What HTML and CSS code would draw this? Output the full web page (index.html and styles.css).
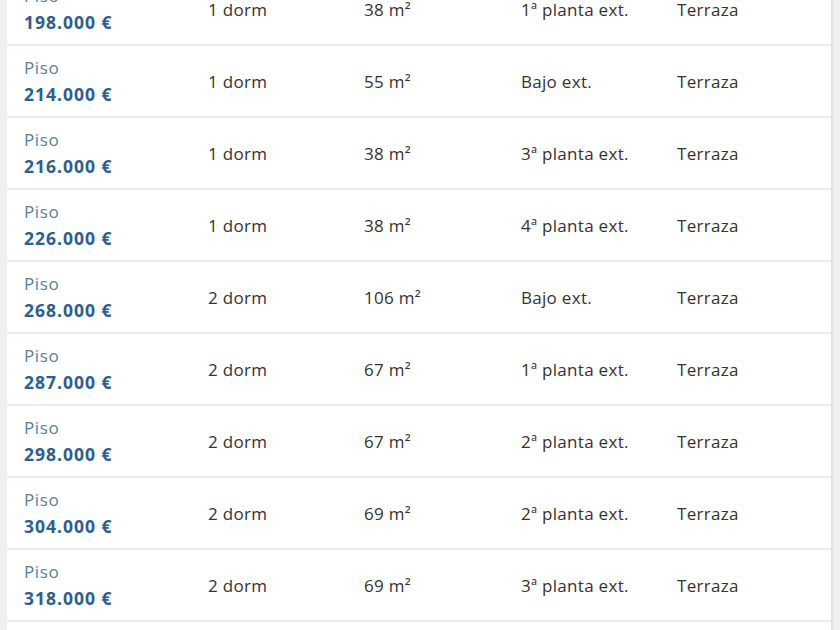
FILE: index.html
```html
<!DOCTYPE html>
<html lang="es">
<head>
<meta charset="utf-8">
<title>Pisos</title>
<link rel="stylesheet" href="styles.css">
</head>
<body>
<div class="panel">
  <div class="row"><div class="type"><span class="kind">Piso</span><span class="price">198.000 €</span></div><div>1 dorm</div><div>38 m²</div><div>1ª planta ext.</div><div>Terraza</div></div>
  <div class="row"><div class="type"><span class="kind">Piso</span><span class="price">214.000 €</span></div><div>1 dorm</div><div>55 m²</div><div>Bajo ext.</div><div>Terraza</div></div>
  <div class="row"><div class="type"><span class="kind">Piso</span><span class="price">216.000 €</span></div><div>1 dorm</div><div>38 m²</div><div>3ª planta ext.</div><div>Terraza</div></div>
  <div class="row"><div class="type"><span class="kind">Piso</span><span class="price">226.000 €</span></div><div>1 dorm</div><div>38 m²</div><div>4ª planta ext.</div><div>Terraza</div></div>
  <div class="row"><div class="type"><span class="kind">Piso</span><span class="price">268.000 €</span></div><div>2 dorm</div><div>106 m²</div><div>Bajo ext.</div><div>Terraza</div></div>
  <div class="row"><div class="type"><span class="kind">Piso</span><span class="price">287.000 €</span></div><div>2 dorm</div><div>67 m²</div><div>1ª planta ext.</div><div>Terraza</div></div>
  <div class="row"><div class="type"><span class="kind">Piso</span><span class="price">298.000 €</span></div><div>2 dorm</div><div>67 m²</div><div>2ª planta ext.</div><div>Terraza</div></div>
  <div class="row"><div class="type"><span class="kind">Piso</span><span class="price">304.000 €</span></div><div>2 dorm</div><div>69 m²</div><div>2ª planta ext.</div><div>Terraza</div></div>
  <div class="row"><div class="type"><span class="kind">Piso</span><span class="price">318.000 €</span></div><div>2 dorm</div><div>69 m²</div><div>3ª planta ext.</div><div>Terraza</div></div>
  <div class="row"><div class="type"><span class="kind">Piso</span><span class="price">328.000 €</span></div><div>2 dorm</div><div>69 m²</div><div>4ª planta ext.</div><div>Terraza</div></div>
</div>
</body>
</html>
```
FILE: styles.css
```css
html, body {
  margin: 0;
  padding: 0;
  background: #efefef;
  overflow: hidden;
  height: 630px;
}
body {
  font-family: "Open Sans", "Noto Sans", sans-serif;
  font-size: 17px;
  letter-spacing: 0.3px;
  color: #333;
}
.panel {
  margin: -26px 0 0 7px;
  width: 824px;
  background: #fff;
  border-right: 2px solid #e2e2e2;
}
.row {
  display: grid;
  grid-template-columns: 184px 156px 157px 156px 1fr;
  align-items: center;
  height: 70px;
  padding-left: 17px;
  border-bottom: 2px solid #ececec;
}
.type {
  display: flex;
  flex-direction: column;
  line-height: 27px;
}
.kind {
  color: #5a7ea4;
  letter-spacing: 0.6px;
}
.price {
  color: #2c5e8e;
  font-weight: 700;
  font-size: 17.5px;
  letter-spacing: 1px;
}
```
